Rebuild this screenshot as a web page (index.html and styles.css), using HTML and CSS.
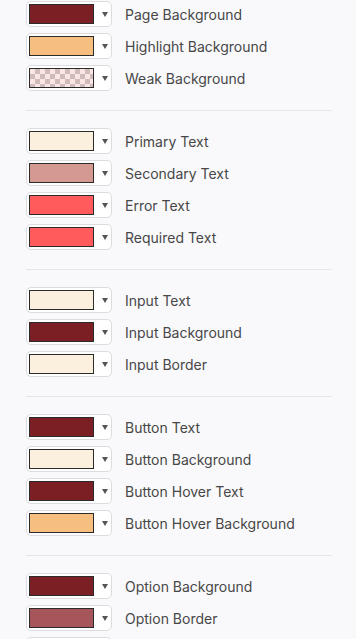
FILE: index.html
```html
<!DOCTYPE html>
<html lang="en">

<head>
    <meta charset="UTF-8">
    <meta name="viewport" content="width=device-width, initial-scale=1.0">
    <title>Theme Colours</title>
    <link rel="stylesheet" href="styles.css">
</head>

<body>
    <div id="themeEditor">
        <div class="group">
            <div class="row"><button class="picker"><span class="swatch c-page"></span><span class="arrow"></span></button><span class="label">Page Background</span></div>
            <div class="row"><button class="picker"><span class="swatch c-highlight"></span><span class="arrow"></span></button><span class="label">Highlight Background</span></div>
            <div class="row"><button class="picker"><span class="swatch c-weak"></span><span class="arrow"></span></button><span class="label">Weak Background</span></div>
        </div>
        <hr>
        <div class="group">
            <div class="row"><button class="picker"><span class="swatch c-cream"></span><span class="arrow"></span></button><span class="label">Primary Text</span></div>
            <div class="row"><button class="picker"><span class="swatch c-secondary"></span><span class="arrow"></span></button><span class="label">Secondary Text</span></div>
            <div class="row"><button class="picker"><span class="swatch c-error"></span><span class="arrow"></span></button><span class="label">Error Text</span></div>
            <div class="row"><button class="picker"><span class="swatch c-error"></span><span class="arrow"></span></button><span class="label">Required Text</span></div>
        </div>
        <hr>
        <div class="group">
            <div class="row"><button class="picker"><span class="swatch c-cream"></span><span class="arrow"></span></button><span class="label">Input Text</span></div>
            <div class="row"><button class="picker"><span class="swatch c-page"></span><span class="arrow"></span></button><span class="label">Input Background</span></div>
            <div class="row"><button class="picker"><span class="swatch c-cream"></span><span class="arrow"></span></button><span class="label">Input Border</span></div>
        </div>
        <hr>
        <div class="group">
            <div class="row"><button class="picker"><span class="swatch c-page"></span><span class="arrow"></span></button><span class="label">Button Text</span></div>
            <div class="row"><button class="picker"><span class="swatch c-cream"></span><span class="arrow"></span></button><span class="label">Button Background</span></div>
            <div class="row"><button class="picker"><span class="swatch c-page"></span><span class="arrow"></span></button><span class="label">Button Hover Text</span></div>
            <div class="row"><button class="picker"><span class="swatch c-highlight"></span><span class="arrow"></span></button><span class="label">Button Hover Background</span></div>
        </div>
        <hr>
        <div class="group">
            <div class="row"><button class="picker"><span class="swatch c-page"></span><span class="arrow"></span></button><span class="label">Option Background</span></div>
            <div class="row"><button class="picker"><span class="swatch c-option-border"></span><span class="arrow"></span></button><span class="label">Option Border</span></div>
            <div class="row"><button class="picker"><span class="swatch c-cream"></span><span class="arrow"></span></button></div>
        </div>
    </div>
</body>

</html>
```

FILE: styles.css
```css
body {
    margin: 0;
    padding: 0;
    background-color: #f9f9fb;
    font-family: 'Inter', sans-serif;
}

#themeEditor {
    padding: 1px 24px 0 26px;
    width: 306px;
}

.group {
    display: flex;
    flex-direction: column;
    gap: 6px;
}

hr {
    border: none;
    height: 1px;
    background-color: #e6e6ea;
    margin: 19px 0 17px 0;
}

.row {
    display: flex;
    align-items: center;
    height: 26px;
}

.picker {
    display: flex;
    align-items: center;
    box-sizing: border-box;
    width: 86px;
    height: 26px;
    padding: 0 0 0 2px;
    margin: 0;
    background-color: #fff;
    border: 1px solid #dcdce0;
    border-radius: 5px;
    cursor: pointer;
}

.swatch {
    display: block;
    box-sizing: border-box;
    width: 65px;
    height: 20px;
    border: 1px solid #2b2b2b;
}

.arrow {
    width: 0;
    height: 0;
    margin-left: 8px;
    border-left: 3px solid transparent;
    border-right: 3px solid transparent;
    border-top: 5px solid #555;
}

.label {
    margin-left: 13px;
    font-size: 14px;
    color: #474747;
}

/* colour swatches */
.c-page { background-color: #7b1f25; }
.c-highlight { background-color: #f6bf80; }
.c-cream { background-color: #fbefde; }
.c-secondary { background-color: #d49a92; }
.c-error { background-color: #ff5a5c; }
.c-option-border { background-color: #a6565b; }

.c-weak {
    background-color: #fce6e5;
    background-image:
        linear-gradient(45deg, #d0bbbb 25%, transparent 25%, transparent 75%, #d0bbbb 75%),
        linear-gradient(45deg, #d0bbbb 25%, transparent 25%, transparent 75%, #d0bbbb 75%);
    background-size: 10px 10px;
    background-position: 0 0, 5px 5px;
}
```
